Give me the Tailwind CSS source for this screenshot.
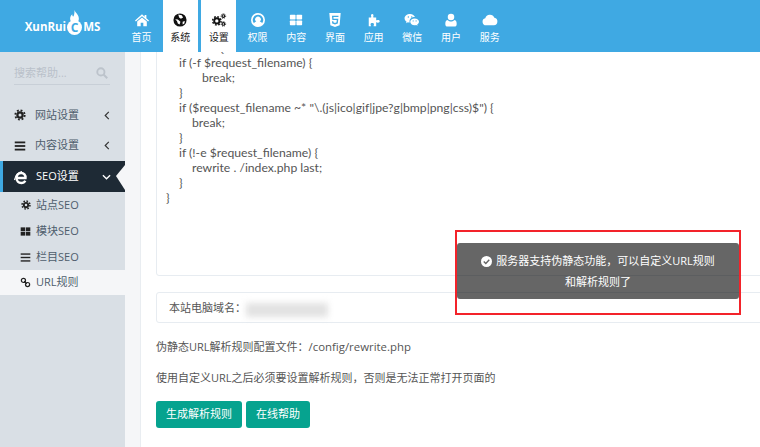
<!DOCTYPE html>
<html lang="zh-CN">
<head>
  <meta charset="UTF-8">
  <title>XunRuiCMS</title>
  <script src="https://cdn.jsdelivr.net/npm/@tailwindcss/browser@4"></script>
</head>
<body class="w-[760px] h-[447px] overflow-hidden relative flex flex-col bg-white text-[11px] text-[#555] font-['Open_Sans','Noto_Sans_CJK_SC',sans-serif]">

  <!-- top nav -->
  <header class="h-[52px] shrink-0 flex bg-[#3fa9e3] text-white relative z-10">
    <div class="w-[124px] h-[50px] flex items-center justify-center pt-[4px] pl-[1px] font-bold text-[11.500px]">
      <span>XunRui</span>
      <span class="relative w-[15px] h-[15px] mx-[1px] rounded-full bg-white text-[#3fa9e3] text-[12px] leading-[15px] text-center">C
        <svg class="absolute left-[2px] -top-[10px] w-[11px] h-[12px]" viewBox="0 0 10 11"><path d="M5 0c1 3 4 4 4 8 0 2-1 3-2 3H3C2 11 1 10 1 8c0-2 1-3 2-4 0 1 0 2 1 2 1-2 1-4 1-6z" fill="#fff"/></svg>
      </span>
      <span>MS</span>
    </div>
    <nav class="flex gap-[3.7px] text-[10px] h-[52px]">
      <a class="w-[35px] h-[50px] flex flex-col items-center pt-[13px] gap-[4px]">
        <svg class="w-[14px] h-[14px]" viewBox="0 0 16 16" fill="currentColor"><path d="M8 1.5 0 8.5l1 1.2L8 3.6l7 6.1 1-1.2-3-2.6V2.2h-2v2.2z"/><path d="M8 5 2.5 9.8V15H6.500v-4h3v4h4V9.800z"/></svg>
        <span class="leading-[13px]">首页</span>
      </a>
      <a class="w-[35px] h-[52px] bg-white text-[#222] flex flex-col items-center pt-[13px] gap-[4px]">
        <svg class="w-[14px] h-[14px]" viewBox="0 0 16 16"><circle cx="8" cy="8" r="7.500" fill="#111"/><path d="M6 1.800 10 2.500 11.500 5 9 6.500 7 5zM2.500 7l3 .5 3 2.500-1 3-2-1-1-3zM11 10l2.500-1-.5 3-2 1z" fill="#fff"/></svg>
        <span class="leading-[13px]">系统</span>
      </a>
      <a class="w-[35px] h-[52px] bg-white text-[#222] flex flex-col items-center pt-[13px] gap-[4px]">
        <svg class="w-[16px] h-[14px]" viewBox="0 0 18 16" fill="none" stroke="#111"><circle cx="6.500" cy="9" r="3" stroke-width="2.200"/><circle cx="6.500" cy="9" r="4.800" stroke-width="1.600" stroke-dasharray="2 1.770"/><circle cx="14" cy="3.500" r="1.500" stroke-width="1.200"/><circle cx="14" cy="3.500" r="2.600" stroke-width="1" stroke-dasharray="1.100 .94"/><circle cx="14" cy="12.500" r="1.500" stroke-width="1.200"/><circle cx="14" cy="12.500" r="2.600" stroke-width="1" stroke-dasharray="1.100 .94"/></svg>
        <span class="leading-[13px]">设置</span>
      </a>
      <a class="w-[35px] h-[50px] flex flex-col items-center pt-[13px] gap-[4px]">
        <svg class="w-[14px] h-[14px]" viewBox="0 0 16 16" fill="#fff"><path fill-rule="evenodd" d="M8 0a8 8 0 1 0 0 16A8 8 0 0 0 8 0zm0 2a6 6 0 0 1 4.700 9.700C12 10.500 11 10 10 9.800a3.200 3.200 0 1 0-4 0c-1 .2-2 .7-2.700 1.900A6 6 0 0 1 8 2z"/></svg>
        <span class="leading-[13px]">权限</span>
      </a>
      <a class="w-[35px] h-[50px] flex flex-col items-center pt-[13px] gap-[4px]">
        <svg class="w-[14px] h-[14px]" viewBox="0 0 16 16" fill="#fff"><rect x="1" y="2" width="6.500" height="5.500" rx=".8"/><rect x="8.500" y="2" width="6.500" height="5.500" rx=".8"/><rect x="1" y="8.500" width="6.500" height="5.500" rx=".8"/><rect x="8.500" y="8.500" width="6.500" height="5.500" rx=".8"/></svg>
        <span class="leading-[13px]">内容</span>
      </a>
      <a class="w-[35px] h-[50px] flex flex-col items-center pt-[13px] gap-[4px]">
        <svg class="w-[14px] h-[14px]" viewBox="0 0 16 16" fill="#fff"><path fill-rule="evenodd" d="M1.500 0h13L13.300 14 8 16l-5.300-2zM4.500 3l.5 5h5l-.2 2.700L8 11.300l-1.800-.6-.1-1.200H4.600l.2 2.500L8 13l3.200-1 .6-5.300H6.300L6.200 4.500h5.700l.1-1.500z"/></svg>
        <span class="leading-[13px]">界面</span>
      </a>
      <a class="w-[35px] h-[50px] flex flex-col items-center pt-[13px] gap-[4px]">
        <svg class="w-[14px] h-[14px]" viewBox="0 0 16 16" fill="#fff"><path d="M2 5h2.500C5 5 5 4.500 4.800 4 4.300 3 4.500 1 6 1s1.700 2 1.200 3C7 4.500 7 5 7.500 5H10.500v3c0 .5.500.5 1 .2 1-.6 3-.4 3 1.300s-2 1.900-3 1.300c-.5-.3-1-.3-1 .2V15H7.500c0-1 .5-1.500.5-2.200C8 12 7 11.500 6 11.500s-2 .5-2 1.300c0 .7.500 1.200.5 2.200H2z"/></svg>
        <span class="leading-[13px]">应用</span>
      </a>
      <a class="w-[35px] h-[50px] flex flex-col items-center pt-[13px] gap-[4px]">
        <svg class="w-[16px] h-[14px]" viewBox="0 0 18 16" fill="#fff"><path d="M7 1C3.200 1 .5 3.300.5 6c0 1.600.9 3 2.300 3.900l-.6 1.800 2.100-1.100c.7.200 1.400.3 2.100.3-.2-.5-.2-1-.2-1.500 0-2.800 2.600-4.800 5.800-4.800h.4C11.800 2.600 9.600 1 7 1z"/><path d="M12 6.200c-2.900 0-5 1.800-5 3.900S9.100 14 12 14c.6 0 1.200-.1 1.700-.3l1.700 1-.5-1.500c1.300-.8 2.100-1.900 2.100-3.100 0-2.100-2.100-3.900-5-3.900z"/><g fill="#3fa9e3"><circle cx="4.800" cy="4.600" r=".8"/><circle cx="8.700" cy="4.600" r=".8"/><circle cx="10.300" cy="9" r=".6"/><circle cx="13.700" cy="9" r=".6"/></g></svg>
        <span class="leading-[13px]">微信</span>
      </a>
      <a class="w-[35px] h-[50px] flex flex-col items-center pt-[13px] gap-[4px]">
        <svg class="w-[14px] h-[14px]" viewBox="0 0 16 16" fill="#fff"><circle cx="8" cy="4.500" r="3.700"/><path d="M3.800 8c1 1 2.600 1.700 4.200 1.700S11.200 9 12.200 8c1.600.3 2.300 2 2.300 4.500 0 2-1 3-2.500 3H4c-1.500 0-2.500-1-2.500-3C1.500 10 2.200 8.300 3.800 8z"/></svg>
        <span class="leading-[13px]">用户</span>
      </a>
      <a class="w-[35px] h-[50px] flex flex-col items-center pt-[13px] gap-[4px]">
        <svg class="w-[16px] h-[14px]" viewBox="0 0 18 16" fill="#fff"><path d="M4.500 14A4 4 0 0 1 3.600 6.100 5.500 5.500 0 0 1 14 5.500 4.300 4.300 0 0 1 13.500 14z"/></svg>
        <span class="leading-[13px]">服务</span>
      </a>
    </nav>
  </header>

  <div class="flex-1 flex min-h-0">
    <!-- sidebar -->
    <aside class="w-[125px] shrink-0 bg-[#d9dfe5] text-[#4e5d6c] text-[11px]">
      <div class="mx-[14px] mt-[14px] w-[96px] h-[19px] pb-[4px] border-b border-[#c8cfd7] flex items-center justify-between text-[#b9c1ca]">
        <span>搜索帮助...</span>
        <svg class="w-[12px] h-[12px] mr-[2px]" viewBox="0 0 16 16" fill="none" stroke="#bcc3cb" stroke-width="2.500"><circle cx="6.500" cy="6.500" r="4.800"/><path d="m10 10 5 5"/></svg>
      </div>
      <div class="mt-[15px] h-[30px] flex items-center pl-[14px]">
        <svg class="w-[12px] h-[12px] text-[#222]" viewBox="0 0 16 16" fill="none" stroke="currentColor"><circle cx="8" cy="8" r="3.500" stroke-width="3"/><circle cx="8" cy="8" r="6.300" stroke-width="2.400" stroke-dasharray="2.500 2.450"/></svg>
        <span class="ml-[9px] flex-1">网站设置</span>
        <svg class="w-[6px] h-[9px] mr-[15px]" viewBox="0 0 6 10" fill="none" stroke="#333" stroke-width="1.300"><path d="M5 1 1 5l4 4"/></svg>
      </div>
      <div class="h-[31px] flex items-center pl-[14px]">
        <svg class="w-[12px] h-[12px] text-[#222]" viewBox="0 0 16 16" fill="currentColor"><rect x="1" y="2" width="14" height="2.400"/><rect x="1" y="6.800" width="14" height="2.400"/><rect x="1" y="11.600" width="14" height="2.400"/></svg>
        <span class="ml-[9px] flex-1">内容设置</span>
        <svg class="w-[6px] h-[9px] mr-[15px]" viewBox="0 0 6 10" fill="none" stroke="#333" stroke-width="1.300"><path d="M5 1 1 5l4 4"/></svg>
      </div>
      <div class="relative h-[31px] flex items-center pl-[10px] bg-[#1e2a35] border-l-[3px] border-[#3fa9e3] text-white">
        <svg class="w-[16px] h-[16px]" viewBox="0 0 16 16" fill="none" stroke="#fff"><path d="M4 9h8.500c.3-3-1.700-5-4.300-5C5.500 4 3.500 6 3.500 9s2 5 4.800 5c1.800 0 3.200-.8 4-2.300" stroke-width="2.400"/><path d="M9 2.500C5.500 3 2.500 6.500 1.500 11" stroke-width="1.200"/></svg>
        <span class="ml-[7px] flex-1">SEO设置</span>
        <svg class="w-[9px] h-[6px] mr-[14px]" viewBox="0 0 10 6" fill="none" stroke="#fff" stroke-width="1.500"><path d="m1 1 4 4 4-4"/></svg>
        <span class="absolute right-0 top-[4px] w-0 h-0 border-t-[11px] border-b-[14px] border-y-transparent border-r-[9px] border-r-[#f5f6f8]"></span>
      </div>
      <div class="h-[26px] flex items-center pl-[21px]">
        <svg class="w-[10px] h-[10px] text-[#222]" viewBox="0 0 16 16" fill="none" stroke="currentColor"><circle cx="8" cy="8" r="3.500" stroke-width="3"/><circle cx="8" cy="8" r="6.300" stroke-width="2.400" stroke-dasharray="2.500 2.450"/></svg>
        <span class="ml-[5px]">站点SEO</span>
      </div>
      <div class="h-[26px] flex items-center pl-[20px]">
        <svg class="w-[11px] h-[11px] text-[#222]" viewBox="0 0 16 16" fill="currentColor"><rect x="1" y="2" width="6.500" height="5.500"/><rect x="8.500" y="2" width="6.500" height="5.500"/><rect x="1" y="8.500" width="6.500" height="5.500"/><rect x="8.500" y="8.500" width="6.500" height="5.500"/></svg>
        <span class="ml-[5px]">模块SEO</span>
      </div>
      <div class="h-[26px] flex items-center pl-[20px]">
        <svg class="w-[11px] h-[11px] text-[#222]" viewBox="0 0 16 16" fill="currentColor"><rect x="1" y="2" width="14" height="2"/><rect x="1" y="7" width="14" height="2"/><rect x="1" y="12" width="14" height="2"/></svg>
        <span class="ml-[5px]">栏目SEO</span>
      </div>
      <div class="h-[25px] flex items-center pl-[20px] bg-[#f5f6f8]">
        <svg class="w-[11px] h-[11px] text-[#222]" viewBox="0 0 16 16" fill="none" stroke="currentColor" stroke-width="1.800"><circle cx="5" cy="5" r="3"/><circle cx="11" cy="11" r="3"/><path d="m6 6 4 4"/></svg>
        <span class="ml-[5px]">URL规则</span>
      </div>
    </aside>

    <!-- content -->
    <main class="flex-1 min-w-0 flex bg-[#f5f6f8]">
      <div class="ml-[15px] flex-1 min-w-0 bg-white border-l border-[#e9edf1] pl-[15px] overflow-hidden">
        <div class="-mt-[18px] h-[242px] -mr-[10px] border border-[#e7ecf1] rounded-[3px] pl-[9px] pt-[5px] text-[12.200px] leading-[15px] text-[#555] font-['Lato','Noto_Sans_CJK_SC',sans-serif] whitespace-nowrap">
          <div>location / {</div>
          <div class="pl-[13px]">if (-f $request_filename) {</div>
          <div class="pl-[36px]">break;</div>
          <div class="pl-[13px]">}</div>
          <div class="pl-[13px]">if ($request_filename ~* "\.(js|ico|gif|jpe?g|bmp|png|css)$") {</div>
          <div class="pl-[26px]">break;</div>
          <div class="pl-[13px]">}</div>
          <div class="pl-[13px]">if (!-e $request_filename) {</div>
          <div class="pl-[26px]">rewrite . /index.php last;</div>
          <div class="pl-[13px]">}</div>
          <div>}</div>
        </div>
        <div class="mt-[16px] h-[31px] -mr-[10px] border border-[#e7ecf1] rounded-[3px] flex items-center pl-[12px] pt-[2px]">
          <span>本站电脑域名：</span>
          <span class="w-[82px] h-[14px] mt-[2px] bg-[#e2e2e2] blur-[3px]"></span>
        </div>
        <p class="mt-[16px] leading-[15px]">伪静态URL解析规则配置文件：<span class="text-[11.400px]">/config/rewrite.php</span></p>
        <p class="mt-[16px] leading-[15px]">使用自定义URL之后必须要设置解析规则，否则是无法正常打开页面的</p>
        <div class="mt-[16px] flex gap-[4px] text-white text-[11px]">
          <button class="w-[86px] h-[27px] rounded-[3px] bg-[#06a38f]">生成解析规则</button>
          <button class="w-[64px] h-[27px] rounded-[3px] bg-[#06a38f]">在线帮助</button>
        </div>
      </div>
    </main>
  </div>

  <!-- toast with the red annotation box -->
  <div class="absolute left-[455px] top-[230px] w-[286px] h-[85px] border-2 border-[#f3232a] z-20 pt-[11px] pl-0">
    <div class="w-[282px] h-[56px] rounded-[3px] bg-black/60 text-white text-[11px] leading-[21px] text-center pt-[7px] px-[20px]">
      <svg class="inline w-[11px] h-[11px] mr-[4px] -mt-[2px]" viewBox="0 0 16 16"><circle cx="8" cy="8" r="8" fill="#fff"/><path d="m4 8 3 3 5-5.500" fill="none" stroke="#666" stroke-width="2"/></svg>服务器支持伪静态功能，可以自定义URL规则和解析规则了
    </div>
  </div>
</body>
</html>
